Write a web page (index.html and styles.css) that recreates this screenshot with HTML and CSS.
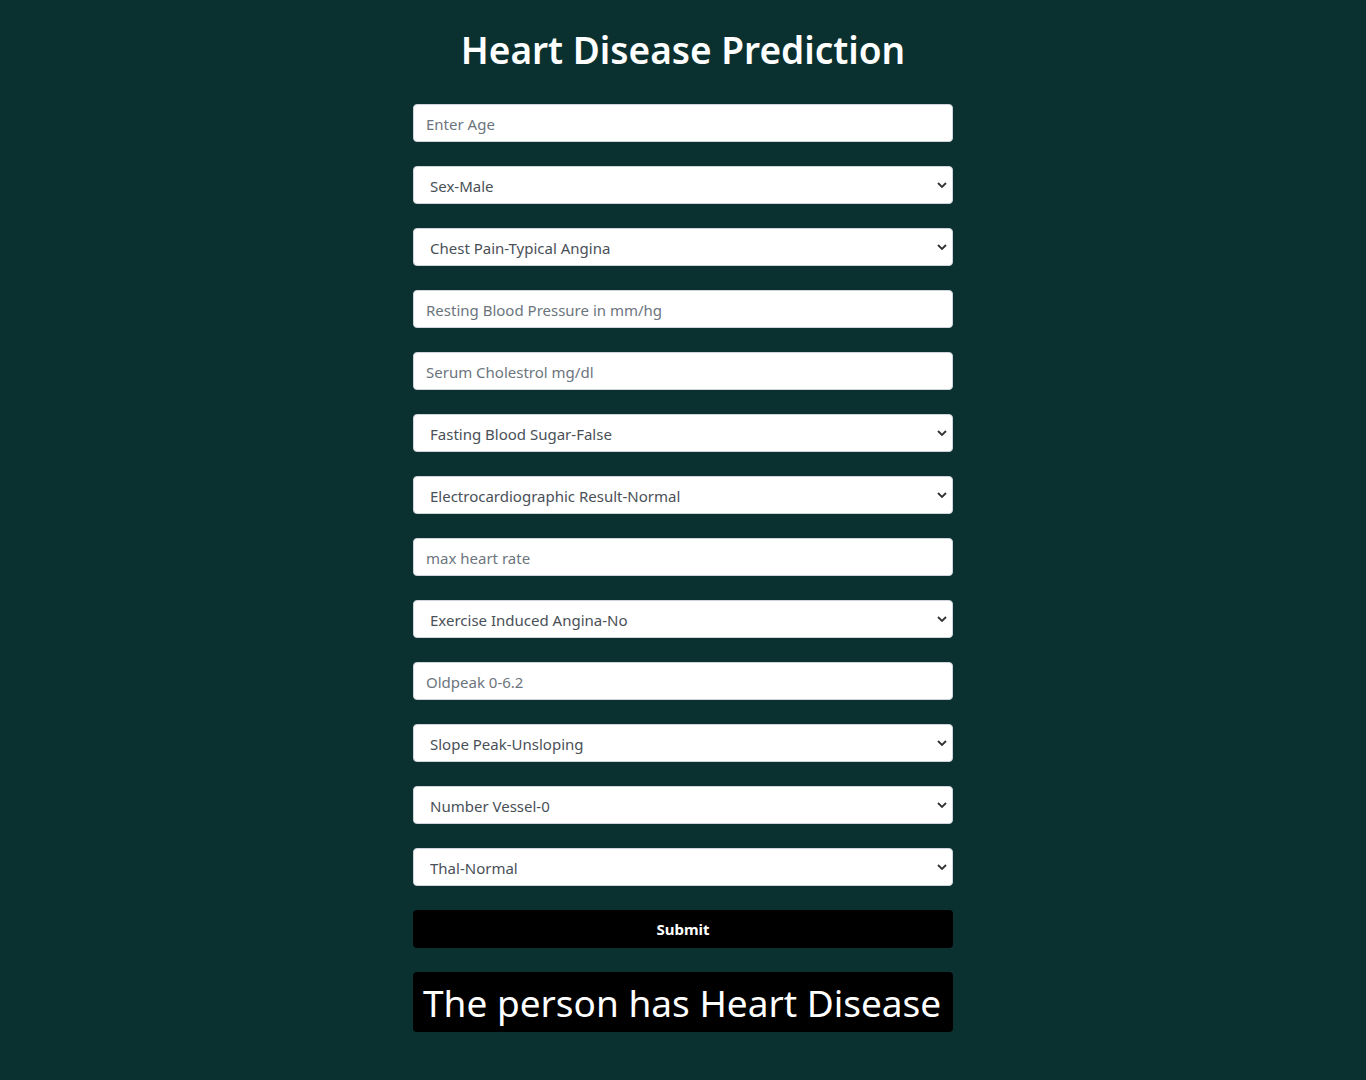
FILE: index.html
```html
<!DOCTYPE html>
<html>
<head>
<meta charset="utf-8">
<title>Heart Disease Prediction</title>
<link rel="stylesheet" href="styles.css">
</head>
<body>
<main class="page">
  <h1 class="title">Heart Disease Prediction</h1>
  <form class="form">
    <input class="field" type="text" placeholder="Enter Age">
    <select class="field select"><option>Sex-Male</option></select>
    <select class="field select"><option>Chest Pain-Typical Angina</option></select>
    <input class="field" type="text" placeholder="Resting Blood Pressure in mm/hg">
    <input class="field" type="text" placeholder="Serum Cholestrol mg/dl">
    <select class="field select"><option>Fasting Blood Sugar-False</option></select>
    <select class="field select"><option>Electrocardiographic Result-Normal</option></select>
    <input class="field" type="text" placeholder="max heart rate">
    <select class="field select"><option>Exercise Induced Angina-No</option></select>
    <input class="field" type="text" placeholder="Oldpeak 0-6.2">
    <select class="field select"><option>Slope Peak-Unsloping</option></select>
    <select class="field select"><option>Number Vessel-0</option></select>
    <select class="field select"><option>Thal-Normal</option></select>
    <button class="submit" type="button">Submit</button>
  </form>
  <div class="result">The person has Heart Disease</div>
</main>
</body>
</html>
```
FILE: styles.css
```css
html, body {
  margin: 0;
  padding: 0;
  background: #0a3130;
  font-family: "Noto Sans", "Open Sans", sans-serif;
}
.page {
  width: 540px;
  margin: 0 auto;
  display: flex;
  flex-direction: column;
}
.title {
  margin: 26px 0 30px;
  color: #fff;
  text-align: center;
  font-size: 37px;
  font-weight: 600;
  line-height: 48px;
}
.form {
  display: flex;
  flex-direction: column;
  gap: 24px;
}
.field {
  box-sizing: border-box;
  width: 100%;
  height: 38px;
  margin: 0;
  padding: 2px 12px 0;
  border: 1px solid #ced4da;
  border-radius: 4px;
  background: #fff;
  color: #495057;
  font-family: inherit;
  font-size: 15px;
  outline: none;
}
.field::placeholder {
  color: #6c757d;
}
.select {
  appearance: none;
  -webkit-appearance: none;
  padding-left: 16px;
  background-image: url("data:image/svg+xml,%3Csvg xmlns='http://www.w3.org/2000/svg' width='10' height='6' viewBox='0 0 10 6'%3E%3Cpath d='M1 1l4 4 4-4' fill='none' stroke='%23333' stroke-width='1.8'/%3E%3C/svg%3E");
  background-repeat: no-repeat;
  background-position: right 5px center;
  background-size: 10px 6px;
}
.submit {
  height: 38px;
  border: 0;
  border-radius: 4px;
  background: #000;
  color: #fff;
  font-family: inherit;
  font-size: 15px;
  font-weight: 700;
  cursor: pointer;
}
.result {
  margin-top: 24px;
  height: 60px;
  box-sizing: border-box;
  padding: 0 10px;
  border-radius: 4px;
  background: #000;
  color: #fff;
  font-size: 37px;
  line-height: 62px;
  white-space: nowrap;
}
```
